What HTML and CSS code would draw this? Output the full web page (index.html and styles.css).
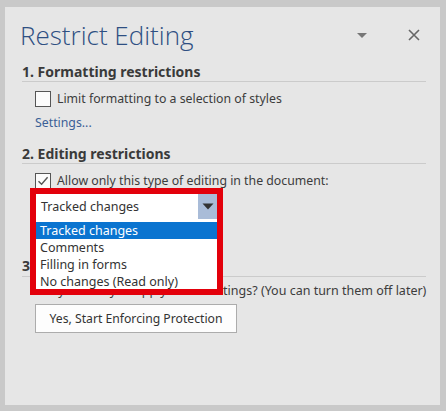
FILE: index.html
```html
<!DOCTYPE html>
<html lang="en">
<head>
<meta charset="utf-8">
<title>Restrict Editing</title>
<link rel="stylesheet" href="styles.css">
</head>
<body>
<div class="panel">
  <div class="titlebar">
    <h1 class="title">Restrict Editing</h1>
    <span class="menu-btn"><svg width="12" height="7" viewBox="0 0 12 7"><path d="M1 1h10L6 6z" fill="#777"/></svg></span>
    <span class="close-btn"><svg width="12" height="12" viewBox="0 0 12 12"><path d="M1 1L11 11M11 1L1 11" stroke="#666" stroke-width="1.6" fill="none"/></svg></span>
  </div>

  <section class="sec">
    <h2 class="sec-head">1. Formatting restrictions</h2>
    <div class="check"><span class="box"></span><span>Limit formatting to a selection of styles</span></div>
    <a class="link">Settings...</a>
  </section>

  <section class="sec sec2">
    <h2 class="sec-head">2. Editing restrictions</h2>
    <div class="check check2"><span class="box"><svg width="14" height="14" viewBox="0 0 14 14"><path d="M2.5 7.2L5.6 10.3L11.6 3.2" stroke="#555" stroke-width="1.4" fill="none"/></svg></span><span>Allow only this type of editing in the document:</span></div>
    <div class="combo-wrap">
      <div class="combo"><span class="combo-value">Tracked changes</span><span class="combo-btn"><svg width="12" height="7" viewBox="0 0 12 7"><path d="M0.5 0.5h11L6 6.5z" fill="#333"/></svg></span></div>
      <ul class="combo-list">
        <li class="selected">Tracked changes</li>
        <li>Comments</li>
        <li>Filling in forms</li>
        <li>No changes (Read only)</li>
      </ul>
    </div>
  </section>

  <section class="sec sec3">
    <h2 class="sec-head">3. Start enforcement</h2>
    <p class="note">Are you ready to apply these settings? (You can turn them off later)</p>
    <button class="btn">Yes, Start Enforcing Protection</button>
  </section>

  <div class="highlight"></div>
</div>
</body>
</html>
```

FILE: styles.css
```css
html, body {
  margin: 0;
  padding: 0;
}
body {
  background: #c9c9c9;
  font-family: "Noto Sans", "Open Sans", sans-serif;
  color: #3c3c3c;
  width: 446px;
  height: 411px;
  overflow: hidden;
}
.panel {
  position: relative;
  margin: 7px 6px 0 5px;
  height: 398px;
  background: #e6e6e6;
  padding: 10px 14px 0 17px;
  box-sizing: border-box;
}
.titlebar {
  display: flex;
  align-items: center;
  height: 36px;
}
.title {
  flex: 1;
  margin: 0 0 0 -2px;
  font-family: "Open Sans", "Noto Sans", sans-serif;
  font-weight: 300;
  font-size: 26px;
  line-height: 36px;
  color: #2e4f82;
}
.menu-btn, .close-btn {
  display: flex;
  align-items: center;
  justify-content: center;
  width: 16px;
  height: 16px;
}
.menu-btn { margin-right: 36px; }
.close-btn { margin-right: 4px; }

.sec-head {
  margin: 10px 0 0;
  font-size: 14px;
  line-height: 18px;
  font-weight: 700;
  color: #3a3a3a;
  border-bottom: 1px solid #cbcbcb;
  padding-bottom: 0;
}
.check {
  display: flex;
  align-items: center;
  margin: 8px 0 0 13px;
  font-size: 12.3px;
  line-height: 18px;
  color: #3c3c3c;
}
.box {
  width: 14px;
  height: 14px;
  border: 1px solid #555;
  background: #fbfbfb;
  margin-right: 6px;
  display: flex;
  align-items: center;
  justify-content: center;
}
.link {
  display: block;
  margin: 6px 0 0 13px;
  font-size: 12.3px;
  line-height: 18px;
  color: #3b5f96;
}
.sec2 .sec-head { margin-top: 13px; }
.combo-wrap {
  position: relative;
  margin: 4px 0 0 14px;
  width: 181px;
}
.combo {
  display: flex;
  height: 25px;
  background: #fff;
}
.combo-value {
  flex: 1;
  font-size: 12.5px;
  line-height: 25px;
  padding-left: 5px;
  color: #333;
}
.combo-btn {
  width: 19px;
  background: #a9bcd8;
  display: flex;
  align-items: center;
  justify-content: center;
}
.combo-list {
  position: absolute;
  left: 0;
  top: 25px;
  width: 181px;
  margin: 0;
  padding: 3px 0 0;
  list-style: none;
  background: #fff;
  z-index: 2;
}
.combo-list li {
  font-size: 12.5px;
  line-height: 17px;
  height: 17px;
  padding-left: 4px;
  color: #333;
}
.combo-list li.selected {
  background: #0a74d0;
  color: #fff;
}
.sec3 .sec-head { margin-top: 38px; padding-bottom: 1px; }
.note {
  margin: 5px 0 0 13px;
  font-size: 12.5px;
  line-height: 18px;
  white-space: nowrap;
}
.btn {
  display: block;
  margin: 4px 0 0 13px;
  width: 202px;
  height: 29px;
  background: #fdfdfd;
  border: 1px solid #acacac;
  font-family: "Noto Sans", "Open Sans", sans-serif;
  font-size: 12.2px;
  color: #333;
  padding: 0;
}
.highlight {
  position: absolute;
  left: 25px;
  top: 181px;
  width: 193px;
  height: 107px;
  box-sizing: border-box;
  border: 6px solid #e3000b;
  z-index: 3;
  pointer-events: none;
}
```
